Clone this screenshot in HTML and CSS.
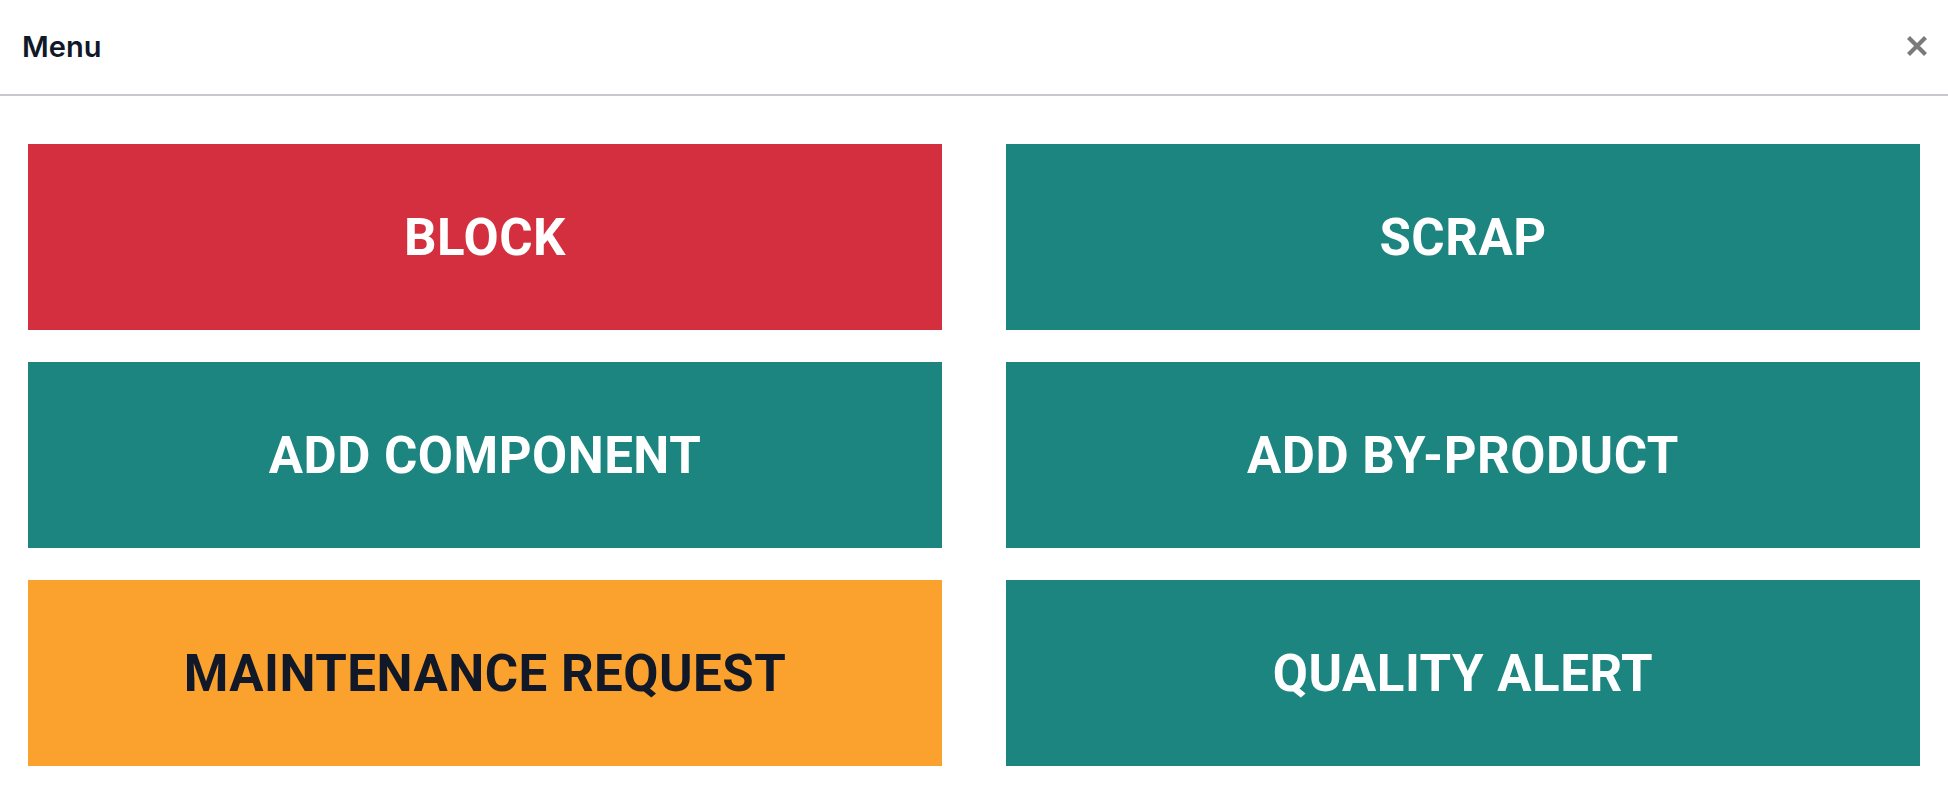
FILE: index.html
```html
<!DOCTYPE html>
<html lang="en">
<head>
  <meta charset="UTF-8" />
  <meta name="viewport" content="width=device-width, initial-scale=1.0" />
  <title>Menu</title>
  <link rel="stylesheet" href="styles.css">
</head>
<body>
  <div class="modal">
    <header class="modal-header">
      <h1>Menu</h1>
      <button class="close" aria-label="Close">
        <svg width="20" height="20" viewBox="0 0 20 20">
          <path d="M3 3 L17 17 M17 3 L3 17" stroke="#7a7a7a" stroke-width="4.2" stroke-linecap="square" />
        </svg>
      </button>
    </header>

    <div class="actions">
      <button class="action red">BLOCK</button>
      <button class="action teal">SCRAP</button>
      <button class="action teal">ADD COMPONENT</button>
      <button class="action teal">ADD BY-PRODUCT</button>
      <button class="action orange">MAINTENANCE REQUEST</button>
      <button class="action teal">QUALITY ALERT</button>
    </div>
  </div>
</body>
</html>
```

FILE: styles.css
```css
* {
  box-sizing: border-box;
}

body {
  margin: 0;
  padding: 0;
  font-family: Roboto, 'Liberation Sans', sans-serif;
  background-color: #fff;
  color: #111827;
}

.modal-header {
  height: 96px;
  display: flex;
  align-items: center;
  justify-content: space-between;
  padding: 0 20px 2px 22px;
  border-bottom: 2px solid #c6c8ce;
}

.modal-header h1 {
  margin: 0;
  font-family: Inter, Roboto, sans-serif;
  font-size: 29px;
  font-weight: 600;
  color: #111827;
}

.close {
  background: none;
  border: none;
  padding: 0;
  width: 22px;
  height: 22px;
  display: flex;
  align-items: center;
  justify-content: center;
  cursor: pointer;
}

.actions {
  display: grid;
  grid-template-columns: 1fr 1fr;
  grid-auto-rows: 186px;
  gap: 32px 64px;
  padding: 48px 28px;
}

.action {
  border: none;
  border-radius: 0;
  font-family: Roboto, sans-serif;
  font-size: 51px;
  font-weight: 700;
  letter-spacing: 0.5px;
  color: #fff;
  cursor: pointer;
}

.red {
  background-color: #d32f3f;
}

.teal {
  background-color: #1c8580;
}

.orange {
  background-color: #fba22e;
  color: #111827;
}
```
